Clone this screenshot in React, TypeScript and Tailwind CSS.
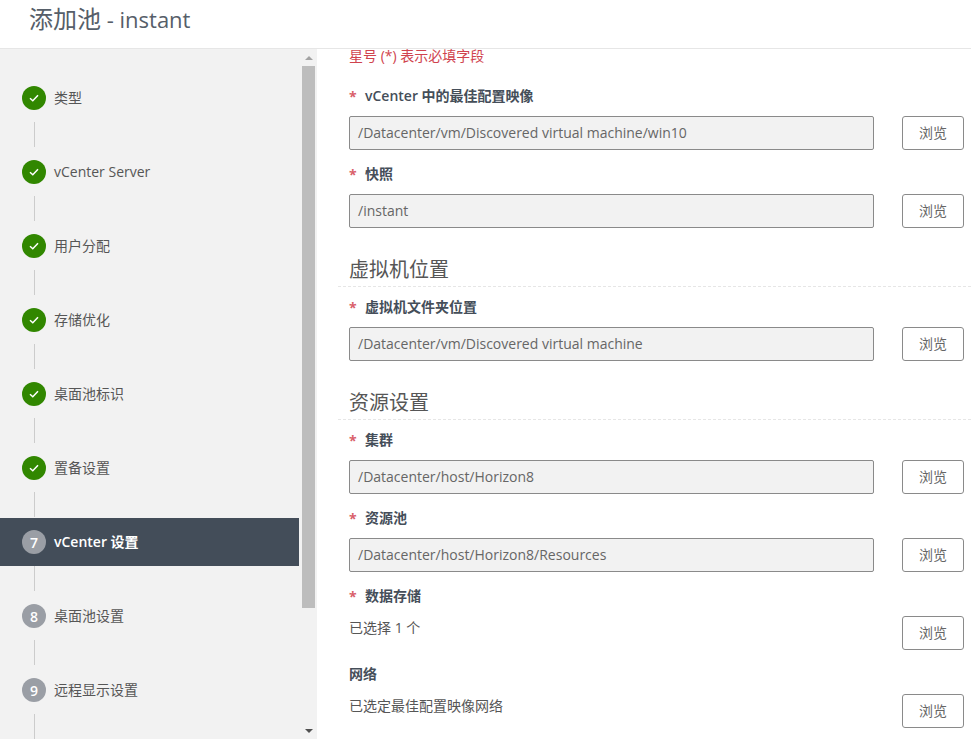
const font = "font-['Open_Sans','Noto_Sans_CJK_SC',sans-serif]";

const steps = [
  { label: "类型", done: true },
  { label: "vCenter Server", done: true },
  { label: "用户分配", done: true },
  { label: "存储优化", done: true },
  { label: "桌面池标识", done: true },
  { label: "置备设置", done: true },
  { label: "vCenter 设置", n: 7, active: true },
  { label: "桌面池设置", n: 8 },
  { label: "远程显示设置", n: 9 },
];

function Check() {
  return (
    <svg width="12" height="10" viewBox="0 0 12 10" fill="none">
      <path d="M2 5.2 L4.8 7.8 L10 2.2" stroke="#ffffff" strokeWidth="1.5" />
    </svg>
  );
}

function Step({ s }: { s: (typeof steps)[number] }) {
  return (
    <>
      <div className={`flex h-[48px] w-[299px] shrink-0 items-center pl-[22px] ${s.active ? "bg-[#434d59]" : ""}`}>
        <div
          className={`flex h-[24px] w-[24px] items-center justify-center rounded-full text-[14px] font-semibold text-white ${
            s.done ? "bg-[#318700]" : "bg-[#9a9ea5]"
          }`}
        >
          {s.done ? <Check /> : s.n}
        </div>
        <div className={`mb-[2px] ml-[8px] text-[14px] ${s.active ? "font-semibold text-white" : "text-[#565656]"}`}>{s.label}</div>
      </div>
      <div className="h-[26px] shrink-0">
        <div className="ml-[34px] h-[25px] w-px bg-[#cccccc]" />
      </div>
    </>
  );
}

function Label({ text, req = true }: { text: string; req?: boolean }) {
  return (
    <div className="flex h-[20px] items-center text-[14px] font-semibold text-[#454e59]">
      {req && <span className="mr-[9px] w-[7px] font-bold text-[#d9606a]">*</span>}
      <span className="mb-[2px]">{text}</span>
    </div>
  );
}

function Browse() {
  return (
    <button className="flex h-[34px] w-[62px] shrink-0 items-center justify-center rounded-[3px] border border-[#8a8a8a] bg-white pb-[2px] text-[14px] text-[#666666]">
      浏览
    </button>
  );
}

function Field({ label, value }: { label: string; value: string }) {
  return (
    <div className="flex flex-col">
      <Label text={label} />
      <div className="mt-[10px] flex items-center">
        <div className="flex h-[34px] w-[525px] items-center rounded-[2px] border border-[#8a8a8a] bg-[#f2f2f2] pb-[2px] pl-[8px] text-[14px] text-[#666666]">
          {value}
        </div>
        <div className="ml-[28px]">
          <Browse />
        </div>
      </div>
    </div>
  );
}

function Section({ title }: { title: string }) {
  return (
    <div className="-ml-[11px] flex h-[36px] items-end border-b border-dashed border-[#e6e6e6] pb-[2px] pl-[11px] text-[20px] leading-[28px] text-[#565656]">
      {title}
    </div>
  );
}

export default function App() {
  return (
    <div className={`flex h-[739px] w-[971px] flex-col overflow-hidden bg-white ${font}`}>
      <header className="flex h-[49px] shrink-0 items-center border-b border-[#e6e6e6] pb-[11px] pl-[29px] text-[24px] text-[#565e69]">
        <span>添加池<span className="text-[22px]"> - instant</span></span>
      </header>
      <div className="flex min-h-0 flex-1">
        <aside className="flex w-[317px] shrink-0 bg-[#f2f2f2]">
          <nav className="flex w-[300px] flex-col overflow-hidden pt-[25px]">
            {steps.map((s) => (
              <Step key={s.label} s={s} />
            ))}
          </nav>
          <div className="flex w-[17px] flex-col items-center">
            <div className="flex h-[17px] items-center justify-center">
              <div className="h-0 w-0 border-x-[4px] border-b-[4px] border-x-transparent border-b-[#a3a3a3]" />
            </div>
            <div className="h-[542px] w-[13px] bg-[#bdbdbd]" />
            <div className="flex-1" />
            <div className="flex h-[17px] items-center justify-center">
              <div className="h-0 w-0 border-x-[4px] border-t-[4px] border-x-transparent border-t-[#505050]" />
            </div>
          </div>
        </aside>
        <main className="min-w-0 flex-1 pl-[32px]">
          <div className="h-[14px] text-[14px] leading-[14px] text-[#d0434e]">星号 (*) 表示必填字段</div>
          <div className="mt-[23px] flex flex-col gap-[14px]">
            <Field label="vCenter 中的最佳配置映像" value="/Datacenter/vm/Discovered virtual machine/win10" />
            <Field label="快照" value="/instant" />
          </div>
          <div className="mt-[23px]">
            <Section title="虚拟机位置" />
          </div>
          <div className="mt-[10px]">
            <Field label="虚拟机文件夹位置" value="/Datacenter/vm/Discovered virtual machine" />
          </div>
          <div className="mt-[23px]">
            <Section title="资源设置" />
          </div>
          <div className="mt-[10px] flex flex-col gap-[14px]">
            <Field label="集群" value="/Datacenter/host/Horizon8" />
            <Field label="资源池" value="/Datacenter/host/Horizon8/Resources" />
            <div>
              <Label text="数据存储" />
              <div className="flex items-start justify-between pr-[7px]">
                <div className="mt-[12px] text-[14px] leading-[20px] text-[#565656]">已选择 1 个</div>
                <div className="mt-[10px]"><Browse /></div>
              </div>
            </div>
            <div>
              <Label text="网络" req={false} />
              <div className="flex items-start justify-between pr-[7px]">
                <div className="mt-[12px] text-[14px] leading-[20px] text-[#565656]">已选定最佳配置映像网络</div>
                <div className="mt-[10px]"><Browse /></div>
              </div>
            </div>
          </div>
        </main>
      </div>
    </div>
  );
}
